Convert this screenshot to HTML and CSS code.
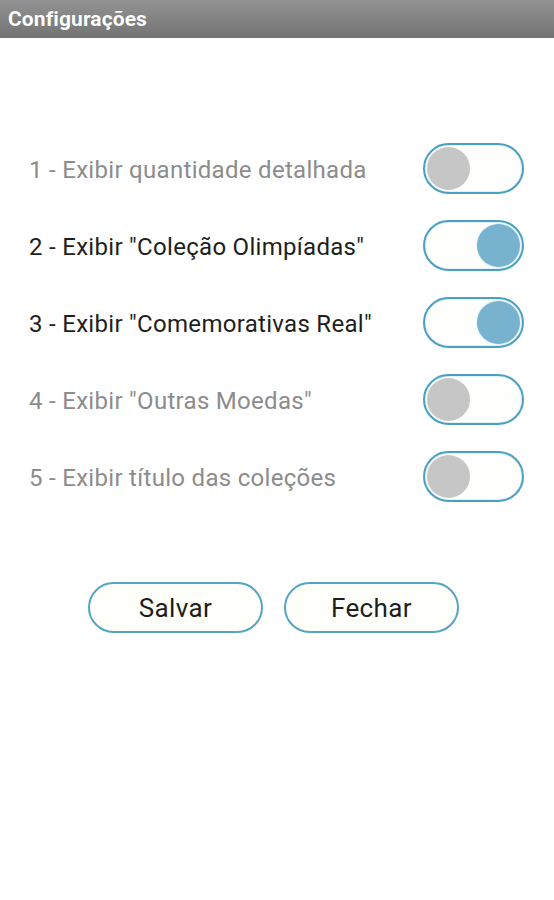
FILE: index.html
```html
<!DOCTYPE html>
<html lang="pt-BR">
<head>
  <meta charset="UTF-8" />
  <meta name="viewport" content="width=device-width, initial-scale=1.0"/>
  <title>Configurações</title>
  <link rel="stylesheet" href="styles.css">
</head>
<body>

  <!-- Title bar -->
  <div class="titlebar">Configurações</div>

  <!-- Options -->
  <div class="options">
    <div class="option">
      <span class="label">1 - Exibir quantidade detalhada</span>
      <div class="switch"><div class="knob"></div></div>
    </div>
    <div class="option on">
      <span class="label">2 - Exibir "Coleção Olimpíadas"</span>
      <div class="switch"><div class="knob"></div></div>
    </div>
    <div class="option on">
      <span class="label">3 - Exibir "Comemorativas Real"</span>
      <div class="switch"><div class="knob"></div></div>
    </div>
    <div class="option">
      <span class="label">4 - Exibir "Outras Moedas"</span>
      <div class="switch"><div class="knob"></div></div>
    </div>
    <div class="option">
      <span class="label">5 - Exibir título das coleções</span>
      <div class="switch"><div class="knob"></div></div>
    </div>
  </div>

  <!-- Buttons -->
  <div class="actions">
    <button class="btn">Salvar</button>
    <button class="btn">Fechar</button>
  </div>

</body>
</html>
```

FILE: styles.css
```css
* { box-sizing: border-box; margin: 0; padding: 0; }
body { font-family: Roboto, 'Noto Sans', sans-serif; background: #fff; width: 554px; height: 900px; }
.titlebar { height: 38px; background: linear-gradient(#939393, #737373); color: #fff; font-weight: bold; font-size: 21px; line-height: 39px; padding-left: 8px; letter-spacing: 0.1px; text-shadow: 0 0 1px rgba(0,0,0,0.2); }
.options { display: flex; flex-direction: column; gap: 27px; padding: 105px 30px 0 29px; }
.option { display: flex; align-items: center; justify-content: space-between; height: 50px; }
.label { font-size: 24px; letter-spacing: 0.3px; color: #8c8c8c; padding-top: 3px; }
.option.on .label { color: #1e1e1e; }
.switch { width: 101px; height: 51px; border: 2px solid #4aa0c0; border-radius: 26px; padding: 2px; display: flex; background: #fefefc; box-shadow: inset 0 0 0 1px #e3f0f5; }
.knob { width: 43px; height: 43px; border-radius: 50%; background: #c6c6c6; }
.option.on .knob { margin-left: auto; background: #77b3cf; box-shadow: 0 0 0 1px #e8f3f7; }
.actions { display: flex; gap: 21px; padding: 81px 0 0 88px; }
.btn { width: 175px; height: 51px; border: 2px solid #52a6c4; border-radius: 26px; background: #fefefb; font-family: Roboto, sans-serif; font-size: 26px; letter-spacing: 0.4px; color: #1e1e1e; }
```
